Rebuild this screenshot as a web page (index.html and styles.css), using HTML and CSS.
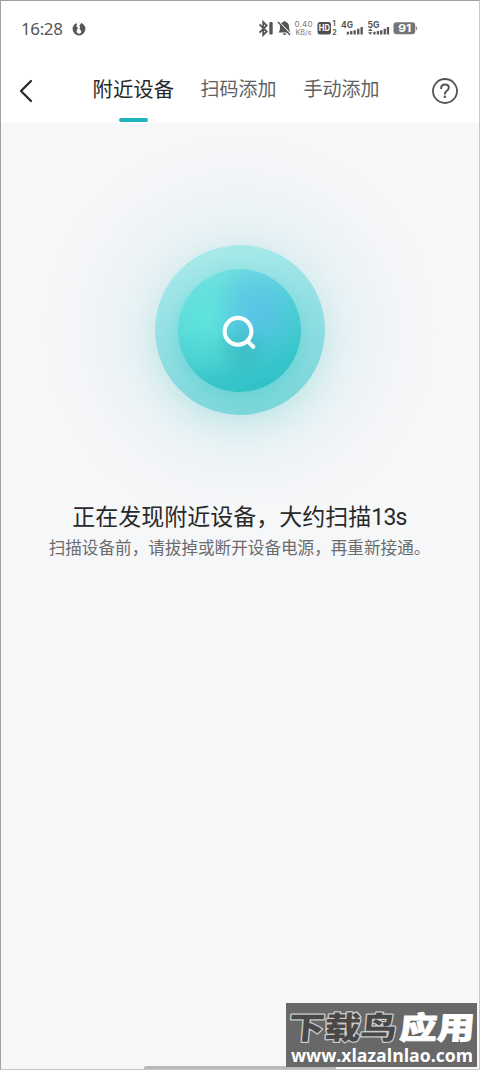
FILE: index.html
```html
<!DOCTYPE html>
<html lang="zh-CN">
<head>
<meta charset="utf-8">
<title>附近设备</title>
<link rel="stylesheet" href="styles.css">
</head>
<body>
<div class="screen">
  <div class="status">
    <span class="clock">16:28</span>
    <svg class="globe" width="14" height="14" viewBox="0 0 14 14"><circle cx="7" cy="7" r="6.4" fill="#565656"/><path d="M4.3.4 5 2.4 4.2 4.3l1.7 1.4-.8 2.1c-1.2 1.6-.6 3.4 1.2 3.8 2.3.5 3.5-1 2.8-2.8L7.5 6.7l.6-2L7.3 3.5 8.7 2 9.2.5z" fill="#fff"/></svg>
    <svg class="signals" width="160" height="20" viewBox="0 0 160 20">
      <path d="m1.5 6.3 7.2 7.2-3.5 3.5V4l3.5 3.5-7.2 7.2" fill="none" stroke="#555" stroke-width="1.8"/>
      <rect x="11.3" y="4" width="3.4" height="12.5" rx="1" fill="#555"/>
      <path d="M20.5 14.5c1.5-1.5 1.4-3.5 1.5-6 .2-3 2-4.5 3.6-4.8l1-.9 1 .9c2.2.7 3.4 2.5 3.5 5 0 2.8.5 4.3 1.7 5.8z" fill="#555"/>
      <path d="M24.8 15.5h3.5c-.4 2.1-3.1 2.1-3.5 0z" fill="#555"/>
      <path d="m21 4 12.3 12.7" stroke="#fff" stroke-width="1.3"/><path d="m20 4 12 13" stroke="#555" stroke-width="1.5"/>
      <text x="36.5" y="9.3" class="speed" textLength="18">0.40</text>
      <text x="37.5" y="16.5" class="unit" textLength="16" lengthAdjust="spacingAndGlyphs">KB/s</text>
      <rect x="59.5" y="4" width="13.5" height="12.6" rx="2.5" fill="#505050"/>
      <text x="60.7" y="13.3" class="hd" textLength="11.2" lengthAdjust="spacingAndGlyphs">HD</text>
      <text x="74.5" y="8.4" class="mini">1</text><text x="74.3" y="16.8" class="mini">2</text>
      <text x="83" y="9.8" class="net" textLength="12" lengthAdjust="spacingAndGlyphs">4G</text>
      <text x="109.5" y="9.8" class="net" textLength="12" lengthAdjust="spacingAndGlyphs">5G</text>
      <g fill="#585858">
        <path d="M88.8 13.7h2.3v2.8h-2.3zM92.1 13h2.3v3.5h-2.3zM95.5 12.3h2.3v4.2h-2.3zM99.1 10.7h2.3v5.8h-2.3zM102.5 9h2.3v7.5h-2.3z"/>
        <path d="M115.3 13.7h2.3v2.8h-2.3zM118.8 13h2.3v3.5h-2.3zM122.1 12.3h2.3v4.2h-2.3zM125.6 10.7h2.3v5.8h-2.3zM128.8 9h2.3v7.5h-2.3z"/>
        <path d="m110 13 2.3-2.4 2.3 2.4zM110 14.2l2.3 2.5 2.3-2.5z"/>
      </g>
      <rect x="135.5" y="4.3" width="21.7" height="12" rx="3" fill="#757575"/>
      <path d="M157.8 8q1.3.2 1.3 2.3t-1.3 2.3z" fill="#888"/>
      <text x="140.3" y="14.4" class="battery" textLength="13" lengthAdjust="spacingAndGlyphs">91</text>
    </svg>
  </div>
  <div class="header">
    <svg class="back" width="16" height="24" viewBox="0 0 16 24"><path d="M13 2 3 12l10 10" fill="none" stroke="#292929" stroke-width="2.3" stroke-linecap="round" stroke-linejoin="round"/></svg>
    <nav class="tabs">
      <span class="tab active">附近设备</span>
      <span class="tab">扫码添加</span>
      <span class="tab">手动添加</span>
    </nav>
    <svg class="help" width="28" height="28" viewBox="0 0 28 28"><g fill="none" stroke="#555" stroke-linecap="round"><circle cx="14" cy="14" r="12" stroke-width="1.8"/><path d="M10.1 11.3c.1-2.5 1.7-3.7 3.8-3.7 2.3 0 3.9 1.3 3.9 3.2 0 3.1-3.9 2.8-3.9 6" stroke-width="2"/></g><circle cx="13.9" cy="19.8" r="1.3" fill="#555"/></svg>
  </div>
  <main class="content">
    <div class="halo">
      <div class="ring">
        <div class="disc">
          <svg width="40" height="40" viewBox="0 0 40 40"><g fill="none" stroke="#fff" stroke-width="4.1" stroke-linecap="round"><circle cx="18" cy="20.3" r="13.4"/><path d="m28 30.6 5.2 5.2"/></g></svg>
        </div>
      </div>
    </div>
    <h1 class="title">正在发现附近设备，大约扫描<span class="seconds">13s</span></h1>
    <p class="hint">扫描设备前，请拔掉或断开设备电源，再重新接通。</p>
  </main>
  <div class="homebar"></div>
  <div class="watermark">
    <svg width="191" height="64" viewBox="0 0 191 64">
      <g transform="translate(4 0) skewX(-5)">
        <text x="1" y="36" class="brand dark" textLength="108" lengthAdjust="spacingAndGlyphs">下载鸟</text>
        <text x="112" y="36" class="brand light" textLength="75" lengthAdjust="spacingAndGlyphs">应用</text>
      </g>
      <text x="5" y="58.5" class="site" textLength="182" lengthAdjust="spacingAndGlyphs">www.xlazalnlao.com</text>
    </svg>
  </div>
</div>
</body>
</html>
```
FILE: styles.css
```css
* { box-sizing: border-box; }
body { margin: 0; font-family: "Noto Sans CJK SC", sans-serif; }
.screen {
  position: relative;
  display: flex;
  flex-direction: column;
  width: 480px;
  height: 1070px;
  overflow: hidden;
  background: #f6f7f9;
  border: 1px solid #a0a0a0;
  border-right-color: #c8c8ca;
  border-bottom-color: #c5c5c7;
}
.status {
  display: flex;
  align-items: center;
  flex: none;
  height: 56px;
  padding-left: 20px;
  background: #fff;
}
.clock { width: 42px; font: 17px/20px "Noto Sans", sans-serif; letter-spacing: -.4px; color: #555; }
.globe { margin: -1px 0 0 9px; }
.signals { margin: -2px 0 0 172px; }
.speed { font: 8px Inter, sans-serif; fill: #777; }
.unit { font: 7px Inter, sans-serif; fill: #777; }
.hd { font: bold 8.5px Inter, sans-serif; fill: #fff; }
.mini { font: bold 7px Inter, sans-serif; fill: #555; }
.net { font: bold 9px Inter, sans-serif; fill: #555; }
.battery { font: bold 11px Inter, sans-serif; fill: #fff; }
.header {
  display: flex;
  align-items: flex-start;
  flex: none;
  height: 66px;
  background: #fff;
}
.back { margin: 22px 0 0 17px; }
.tabs { display: flex; margin-left: 58.5px; width: 288.5px; height: 66px; }
.tab { margin-right: 27px; padding-top: 17px; font-size: 19px; line-height: 28px; color: #626262; white-space: nowrap; }
.active {
  display: flex;
  flex-direction: column;
  align-items: center;
  margin-right: 26.5px;
  font-size: 20.4px;
  color: #292929;
}
.active::after { content: ""; flex: none; width: 29px; height: 4px; margin-top: 16px; border-radius: 2px; background: #1fb4bb; }
.help { margin: 19.5px 0 0 50px; }
.content { display: flex; flex-direction: column; align-items: center; padding-right: 1px; }
.halo {
  display: flex;
  justify-content: center;
  width: 478px;
  height: 377px;
  margin-right: -1px;
  padding: 122px 1px 0 0;
  background: radial-gradient(circle at 238px 207px, #e6f1f4 0 84px, #ebf3f6 115px, #f1f4f7 145px, #f5f6f8 175px, #f6f7f9 195px);
}
.ring {
  display: flex;
  align-items: center;
  justify-content: center;
  width: 170px;
  height: 170px;
  border-radius: 50%;
  background: linear-gradient(165deg, #aaebea 5%, #97e1e5 40%, #7bd6d8 95%);
  box-shadow: 0 10px 34px rgba(90, 200, 200, .28);
}
.disc {
  display: flex;
  align-items: center;
  justify-content: center;
  width: 123px;
  height: 123px;
  margin-top: 1px;
  border-radius: 50%;
  background:
    radial-gradient(circle at 64px 78px, rgba(49, 176, 180, .5) 0, rgba(49, 181, 186, 0) 28px),
    radial-gradient(ellipse 44px 54px at 78px 44px, rgba(91, 192, 236, .8) 0, rgba(91, 193, 234, .55) 38%, rgba(91, 195, 232, 0)),
    radial-gradient(circle at 28px 50px, rgba(96, 229, 221, .9) 0, rgba(86, 220, 216, 0) 60px),
    linear-gradient(160deg, #78e1e3 8%, #4cced3 45%, #30c2c7 88%);
  box-shadow: 0 6px 20px rgba(54, 201, 202, .4);
}
.title { margin: 0; font-size: 23px; font-weight: 400; line-height: 30px; white-space: nowrap; color: #292929; }
.seconds { font-family: Roboto, sans-serif; letter-spacing: -.8px; }
.hint { margin: 2px 0 0; font-size: 16.6px; line-height: 24px; white-space: nowrap; color: #6b6b6c; }
.homebar { position: absolute; left: 143px; bottom: 0; width: 192px; height: 3px; border-radius: 2px 2px 0 0; background: #b8b8b9; }
.watermark { position: absolute; left: 285px; top: 1002px; width: 191px; height: 64px; background: #686868; }
.watermark svg { display: block; }
.brand { font: 900 31px "Noto Sans CJK SC", sans-serif; paint-order: stroke; stroke-linejoin: round; }
.dark { fill: #484848; stroke: #ccc; stroke-width: 2.4px; }
.light { fill: #fff; stroke: #fff; stroke-width: .8px; }
.site { font: bold 18px "Open Sans", sans-serif; fill: #fff; }
```
